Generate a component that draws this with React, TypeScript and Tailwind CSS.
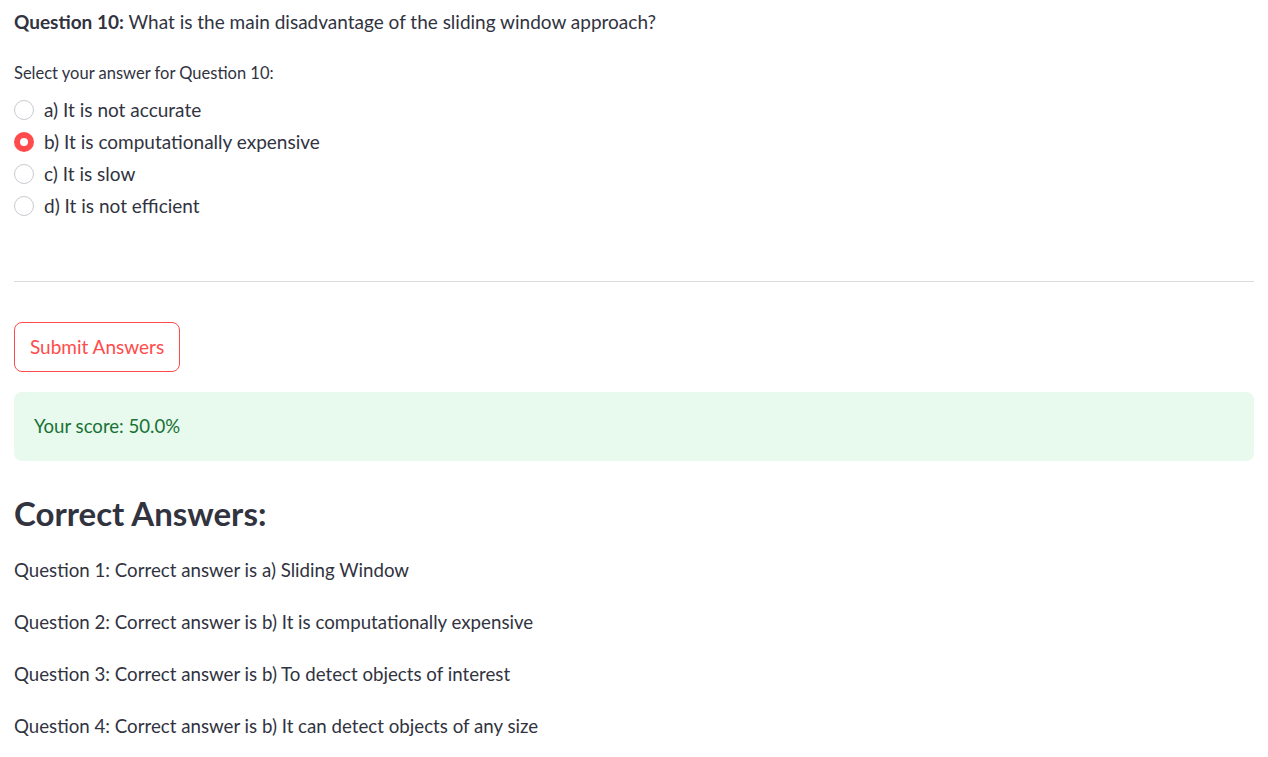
import React from "react";

const options = [
  "a) It is not accurate",
  "b) It is computationally expensive",
  "c) It is slow",
  "d) It is not efficient",
];

const answers = [
  "Question 1: Correct answer is a) Sliding Window",
  "Question 2: Correct answer is b) It is computationally expensive",
  "Question 3: Correct answer is b) To detect objects of interest",
  "Question 4: Correct answer is b) It can detect objects of any size",
];

export default function App() {
  const selected = 1;
  return (
    <div className="min-h-screen bg-white text-[#31333F] font-['Lato',sans-serif]">
      <div className="ml-[14px] flex w-[1240px] flex-col">
        {/* Question */}
        <p className="mt-[10px] h-[24px] text-[19px] leading-[24px]">
          <span className="font-bold">Question 10:</span> What is the main disadvantage of the sliding window approach?
        </p>

        {/* Radio group */}
        <p className="mt-[29px] h-[20px] text-[16.5px] leading-[20px]">Select your answer for Question 10:</p>
        <div className="mt-[11px] flex flex-col">
          {options.map((o, i) => (
            <label key={o} className="flex h-[32px] items-center gap-[10px] text-[19px]">
              {i === selected ? (
                <span className="flex h-[20px] w-[20px] items-center justify-center rounded-full bg-[#FF4B4B]">
                  <span className="h-[8px] w-[8px] rounded-full bg-white" />
                </span>
              ) : (
                <span className="h-[20px] w-[20px] rounded-full border border-[#c9cad0] bg-white" />
              )}
              <span>{o}</span>
            </label>
          ))}
        </div>

        {/* Divider */}
        <hr className="mt-[59px] border-0 border-t border-[#dcdcdf]" />

        {/* Submit */}
        <div className="mt-[40px]">
          <button className="flex h-[50px] items-center rounded-[8px] border border-[#FF4B4B] bg-white px-[15px] text-[19px] text-[#FF4B4B]">
            Submit Answers
          </button>
        </div>

        {/* Score */}
        <div className="mt-[20px] flex h-[69px] items-center rounded-[8px] bg-[#E8F9EE] px-[20px] text-[18.6px] text-[#177233]">
          Your score: 50.0%
        </div>

        {/* Correct answers */}
        <h3 className="mt-[32px] h-[40px] text-[33px] font-bold leading-[40px]">Correct Answers:</h3>
        <div className="mt-[25px] flex flex-col gap-[28px]">
          {answers.map((a) => (
            <p key={a} className="h-[24px] text-[18.7px] leading-[24px]">{a}</p>
          ))}
        </div>
      </div>
    </div>
  );
}
